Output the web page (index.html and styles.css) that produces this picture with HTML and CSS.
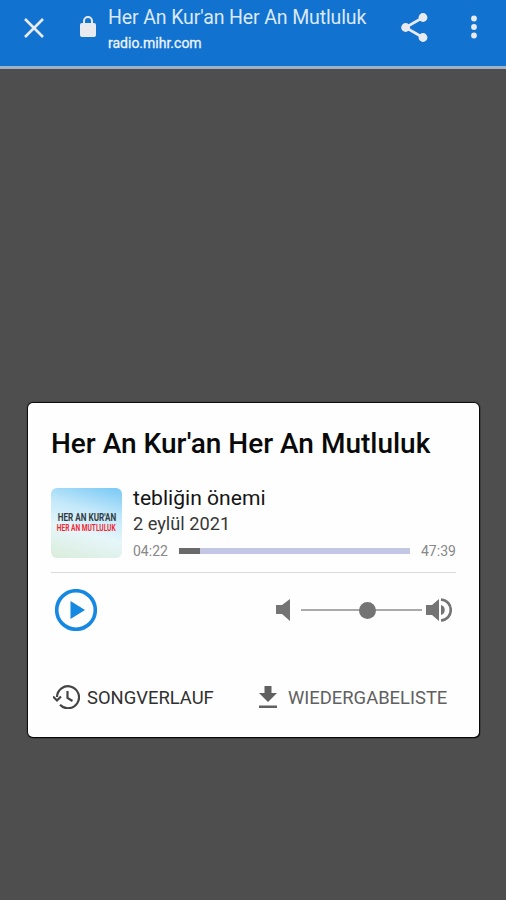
FILE: index.html
```html
<!DOCTYPE html>
<html lang="de">
<head>
<meta charset="utf-8">
<title>Her An Kur'an Her An Mutluluk</title>
<link rel="stylesheet" href="styles.css">
</head>
<body>
<header class="toolbar">
  <svg class="close" viewBox="0 0 20 20"><path d="M1 1 19 19M19 1 1 19"/></svg>
  <svg class="lock" viewBox="0 0 16 21"><path d="M4 8V5a4 4 0 0 1 8 0v3" fill="none" stroke="#e8eaf0" stroke-width="2"/><rect y="7" width="16" height="14" rx="2"/></svg>
  <div class="page-info">
    <div class="page-title">Her An Kur'an Her An Mutluluk</div>
    <div class="page-host">radio.mihr.com</div>
  </div>
  <svg class="share" viewBox="0 0 27 29"><path d="M22 4.500 4.500 14.500 22 24.500" fill="none" stroke="#e8eaf0" stroke-width="2.600"/><circle cx="22" cy="4.500" r="4.400"/><circle cx="4.600" cy="14.500" r="4.400"/><circle cx="22" cy="24.500" r="4.400"/></svg>
  <svg class="more" viewBox="0 0 6 24"><circle cx="3" cy="3.500" r="2.900"/><circle cx="3" cy="12" r="2.900"/><circle cx="3" cy="20.500" r="2.900"/></svg>
</header>
<main class="player">
  <h1 class="station">Her An Kur'an Her An Mutluluk</h1>
  <section class="track">
    <div class="cover">
      <span class="cover-top">HER AN KUR'AN</span>
      <span class="cover-bottom">HER AN MUTLULUK</span>
    </div>
    <div class="details">
      <div class="song">tebliğin önemi</div>
      <div class="date">2 eylül 2021</div>
      <div class="timeline">
        <span class="elapsed">04:22</span>
        <div class="progress"><div class="played"></div></div>
        <span class="total">47:39</span>
      </div>
    </div>
  </section>
  <section class="controls">
    <svg class="play" viewBox="0 0 42 42"><circle cx="21" cy="21" r="19.300"/><path d="M15.500 12v18l14.500-9z"/></svg>
    <div class="volume">
      <svg class="quiet" viewBox="0 0 14 22"><path d="M0 6h6l8-6v22l-8-7H0z"/></svg>
      <div class="slider"><div class="thumb"></div></div>
      <svg class="loud" viewBox="0 0 26 24"><path d="M0 7h6l7-6v22l-7-6H0zM15 7c5 1 5 9 0 10z"/><path class="wave" d="M15 1.500C28 3 28 21 15 22.500"/></svg>
    </div>
  </section>
  <nav class="actions">
    <div class="action history">
      <svg viewBox="0 0 27 24"><path d="M4 12A11 11 0 1 1 7 19.800M0 11.500l4 4 4-4M14.500 6v7l5 3"/></svg>
      <span>SONGVERLAUF</span>
    </div>
    <div class="action playlist">
      <svg viewBox="0 0 18 22"><path d="M5.500 0h7v7H18l-9 9-9-9h5.500zM0 19.500h18V22H0z"/></svg>
      <span>WIEDERGABELISTE</span>
    </div>
  </nav>
</main>
</body>
</html>
```
FILE: styles.css
```css
* { box-sizing: border-box; }
body { margin: 0; height: 900px; overflow: hidden; background: #4e4e4e; font-family: Roboto, sans-serif; }
svg { display: block; flex: none; }
.toolbar { display: flex; height: 69px; background: #1173cf; border-bottom: 3px solid #a0b1c6; fill: #e8eaf0; color: #dce8f8; white-space: nowrap; }
.close { width: 20px; height: 20px; margin: 18px 0 0 24px; stroke: #e8eaf0; stroke-width: 2.6; }
.lock { width: 16px; height: 21px; margin: 16px 0 0 36px; }
.page-info { width: 293px; margin: 6px 0 0 12px; }
.page-title { font-size: 19.5px; line-height: 24px; letter-spacing: -.12px; }
.page-host { font-size: 14px; line-height: 18px; margin-top: 4px; color: #eef4fc; -webkit-text-stroke: .3px; }
.share { width: 27px; height: 29px; margin: 13px 0 0; }
.more { width: 6px; height: 24px; margin: 15px 0 0 43px; }
.player { width: 451px; height: 334px; margin: 334px 0 0 28px; padding: 24px 23px 0; background: #fefefe; border-radius: 5px; box-shadow: 0 0 1px 1px #080808, 1px 1px 1px #080808; white-space: nowrap; }
.station { margin: 0; font-size: 28px; line-height: 34px; font-weight: 500; color: #090909; }
.track { display: flex; height: 85px; margin-top: 27px; border-bottom: 1px solid #dadada; gap: 11px; }
.cover { width: 71px; height: 70px; border-radius: 6px; padding-top: 25px; display: flex; flex-direction: column; align-items: center; background: linear-gradient(15deg, #d9edda, #e6f6fa 38%, #c4e9fa 65%, #78c8f5); font-size: 10px; font-weight: 700; line-height: 10px; }
.cover-top, .cover-bottom { display: block; }
.cover-top { color: #303a40; transform: scaleX(.81); }
.cover-bottom { color: #f02832; font-size: 9px; transform: scaleX(.73); }
.details { flex: 1; }
.song { font-size: 21.1px; line-height: 24px; color: #151515; margin-top: -2px; }
.date { font-size: 18.2px; line-height: 24px; color: #383838; margin-top: 2px; }
.timeline { display: flex; align-items: center; height: 20px; margin-top: 5px; font-size: 14px; color: #888; }
.elapsed { width: 46px; }
.progress { width: 231px; height: 6px; background: #c3c7e4; }
.played { width: 21px; height: 6px; background: #6a6a6a; }
.total { margin-left: 11px; }
.controls { display: flex; justify-content: space-between; padding: 16px 4px 0; height: 73px; }
.play { width: 42px; height: 42px; fill: #1588e1; }
.play circle { fill: none; stroke: #1588e1; stroke-width: 3.6; }
.volume { display: flex; align-items: center; height: 42px; fill: #747474; }
.quiet { width: 14px; height: 22px; }
.slider { width: 121px; height: 2px; margin: 0 4px 0 11px; background: #aaa; display: flex; align-items: center; }
.thumb { width: 17px; height: 17px; border-radius: 50%; background: #747474; margin-left: 58px; }
.loud { width: 26px; height: 24px; }
.wave { fill: none; stroke: #747474; stroke-width: 2.6; }
.actions { display: flex; height: 102px; padding: 38px 0 0 2px; font-size: 18.4px; }
.action { display: flex; align-items: center; height: 26px; }
.history { width: 205px; color: #303030; gap: 7px; }
.history svg { width: 27px; height: 24px; fill: none; stroke: #444; stroke-width: 2.2; }
.playlist { color: #606060; gap: 10px; }
.playlist svg { width: 20px; height: 22px; fill: #606060; }
```
